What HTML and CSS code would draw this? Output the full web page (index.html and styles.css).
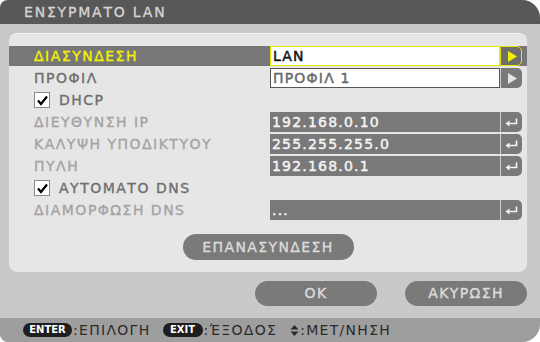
FILE: index.html
```html
<!DOCTYPE html>
<html>
<head>
<meta charset="utf-8">
<link rel="stylesheet" href="styles.css">
</head>
<body>
<div class="frame">
  <div class="title">ΕΝΣΥΡΜΑΤΟ LAN</div>
  <div class="panel">
    <div class="row sel">
      <span class="label">ΔΙΑΣΥΝΔΕΣΗ</span>
      <span class="val white yellow">LAN</span>
      <span class="btn arrow ybtn"><svg width="10" height="11" viewBox="0 0 10 11"><polygon points="1,0 10,5.5 1,11" fill="#f2f200"/></svg></span>
    </div>
    <div class="row">
      <span class="label">ΠΡΟΦΙΛ</span>
      <span class="val white">ΠΡΟΦΙΛ 1</span>
      <span class="btn arrow"><svg width="10" height="11" viewBox="0 0 10 11"><polygon points="1,0 10,5.5 1,11" fill="#e4e4e4"/></svg></span>
    </div>
    <div class="row">
      <span class="label check"><span class="box"><svg width="13" height="11" viewBox="0 0 13 11"><path d="M2 5.5 L5 9 L11 1.5" fill="none" stroke="#000" stroke-width="2.2"/></svg></span>DHCP</span>
    </div>
    <div class="row">
      <span class="label dis">ΔΙΕΥΘΥΝΣΗ IP</span>
      <span class="val dark">192.168.0.10</span>
      <span class="btn enter"><svg width="13" height="9" viewBox="0 0 13 9"><path d="M11.5 0.5 V5.5 H2.5" fill="none" stroke="#f4f4f4" stroke-width="1.6"/><polygon points="0.5,5.5 4.5,2.5 4.5,8.5" fill="#f4f4f4"/></svg></span>
    </div>
    <div class="row">
      <span class="label dis">ΚΑΛΥΨΗ ΥΠΟΔΙΚΤΥΟΥ</span>
      <span class="val dark">255.255.255.0</span>
      <span class="btn enter"><svg width="13" height="9" viewBox="0 0 13 9"><path d="M11.5 0.5 V5.5 H2.5" fill="none" stroke="#f4f4f4" stroke-width="1.6"/><polygon points="0.5,5.5 4.5,2.5 4.5,8.5" fill="#f4f4f4"/></svg></span>
    </div>
    <div class="row">
      <span class="label dis">ΠΥΛΗ</span>
      <span class="val dark">192.168.0.1</span>
      <span class="btn enter"><svg width="13" height="9" viewBox="0 0 13 9"><path d="M11.5 0.5 V5.5 H2.5" fill="none" stroke="#f4f4f4" stroke-width="1.6"/><polygon points="0.5,5.5 4.5,2.5 4.5,8.5" fill="#f4f4f4"/></svg></span>
    </div>
    <div class="row">
      <span class="label check"><span class="box"><svg width="13" height="11" viewBox="0 0 13 11"><path d="M2 5.5 L5 9 L11 1.5" fill="none" stroke="#000" stroke-width="2.2"/></svg></span>ΑΥΤΟΜΑΤΟ DNS</span>
    </div>
    <div class="row">
      <span class="label dis">ΔΙΑΜΟΡΦΩΣΗ DNS</span>
      <span class="val dark">...</span>
      <span class="btn enter"><svg width="13" height="9" viewBox="0 0 13 9"><path d="M11.5 0.5 V5.5 H2.5" fill="none" stroke="#f4f4f4" stroke-width="1.6"/><polygon points="0.5,5.5 4.5,2.5 4.5,8.5" fill="#f4f4f4"/></svg></span>
    </div>
    <div class="reconnect"><span class="pill wide">ΕΠΑΝΑΣΥΝΔΕΣΗ</span></div>
  </div>
  <div class="actions">
    <span class="pill">OK</span>
    <span class="pill">ΑΚΥΡΩΣΗ</span>
  </div>
  <div class="footer">
    <span class="key">ENTER</span><span class="hint">:ΕΠΙΛΟΓΗ</span>
    <span class="key exit">EXIT</span><span class="hint">:ΈΞΟΔΟΣ</span>
    <span class="updown"><svg width="9" height="11" viewBox="0 0 9 11"><polygon points="4.5,0 8.5,4.5 0.5,4.5" fill="#2a2a2a"/><polygon points="4.5,11 8.5,6.5 0.5,6.5" fill="#2a2a2a"/></svg></span><span class="hint">:ΜΕΤ/ΝΗΣΗ</span>
  </div>
</div>
</body>
</html>
```

FILE: styles.css
```css
html, body {
  margin: 0;
  padding: 0;
  background: #ffffff;
}
body {
  font-family: "DejaVu Sans", "Liberation Sans", sans-serif;
  font-size: 14px;
}
.frame {
  width: 540px;
  height: 342px;
  background: #c9c9c9;
  border-radius: 8px 18px 18px 8px;
  overflow: hidden;
  display: flex;
  flex-direction: column;
}
.title {
  height: 24px;
  line-height: 24px;
  background: #585858;
  color: #d6d6d6;
  padding-left: 24px;
  font-size: 14px;
  letter-spacing: 1.8px;
  -webkit-text-stroke: 0.3px #d6d6d6;
}
.panel {
  margin: 9px 0 0 9px;
  width: 518px;
  height: 239px;
  box-sizing: border-box;
  background: #e6e6e6;
  border-radius: 8px;
  border-top: 1px solid #f2f2f2;
  padding-top: 12px;
  display: flex;
  flex-direction: column;
}
.row {
  height: 20px;
  margin-bottom: 2px;
  display: grid;
  grid-template-columns: 261px 230px 22px;
  align-items: stretch;
}
.row.sel {
  background: #777777;
}
.label {
  padding-left: 25px;
  color: #6e6e6e;
  line-height: 20px;
  letter-spacing: 1.5px;
  -webkit-text-stroke: 0.35px currentColor;
  white-space: nowrap;
}
.sel .label {
  color: #f2f200;
}
.label.dis {
  color: #a3a3a3;
}
.label.check {
  display: flex;
  align-items: center;
  grid-column: 1 / 3;
}
.box {
  width: 16px;
  height: 16px;
  box-sizing: border-box;
  border: 1px solid #8a8a8a;
  background: #ffffff;
  display: inline-flex;
  align-items: center;
  justify-content: center;
  margin-right: 9px;
}
.val {
  box-sizing: border-box;
  padding-left: 2px;
  line-height: 18px;
  letter-spacing: 1.2px;
  -webkit-text-stroke: 0.45px currentColor;
  white-space: nowrap;
  overflow: hidden;
}
.val.white {
  background: #ffffff;
  border: 1px solid #555555;
  color: #6a6a6a;
}
.val.white.yellow {
  border-color: #e6e600;
  color: #111111;
}
.val.dark {
  background: #797979;
  color: #f4f4f4;
  line-height: 20px;
}
.btn {
  display: flex;
  align-items: center;
  justify-content: center;
  background: #797979;
  border-left: 1px solid #cfcfcf;
  border-radius: 0 5px 5px 0;
  box-sizing: border-box;
}
.btn.ybtn {
  border: 1px solid #e6e600;
  background: #6e6e6e;
}
.btn.arrow svg {
  margin-left: 1px;
}
.reconnect {
  margin-top: 12px;
  display: flex;
  justify-content: center;
}
.pill {
  display: inline-block;
  background: #7a7a7a;
  color: #dcdcdc;
  height: 25px;
  line-height: 25px;
  width: 122px;
  text-align: center;
  border-radius: 13px;
  letter-spacing: 1.4px;
  -webkit-text-stroke: 0.35px #dcdcdc;
}
.pill.wide {
  width: 171px;
  height: 26px;
  line-height: 26px;
}
.actions {
  margin-top: 9px;
  padding-right: 13px;
  display: flex;
  justify-content: flex-end;
  gap: 28px;
}
.footer {
  margin-top: auto;
  height: 24px;
  background: #9e9e9e;
  display: flex;
  align-items: center;
  padding-left: 23px;
  color: #2a2a2a;
}
.key {
  background: #1e1e1e;
  color: #ffffff;
  font-family: "DejaVu Sans", sans-serif;
  font-weight: bold;
  font-size: 10px;
  height: 14px;
  line-height: 14px;
  width: 49px;
  text-align: center;
  border-radius: 7px;
}
.key.exit {
  width: 40px;
  margin-left: 12px;
}
.hint {
  font-size: 14px;
  letter-spacing: 1.3px;
  margin-left: 1px;
}
.updown {
  margin-left: 13px;
  display: inline-flex;
  align-items: center;
}
```
